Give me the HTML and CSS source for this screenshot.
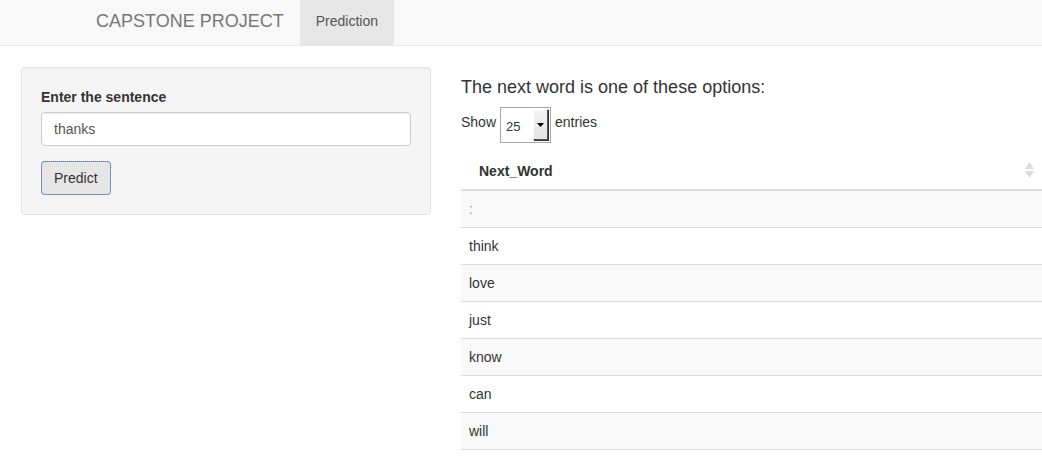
FILE: index.html
```html
<!DOCTYPE html>
<html>
<head>
<meta charset="utf-8">
<link rel="stylesheet" href="styles.css">
</head>
<body>
<nav class="navbar">
  <span class="brand">CAPSTONE PROJECT</span>
  <span class="tab active">Prediction</span>
</nav>
<main class="main">
  <section class="well">
    <label class="label">Enter the sentence</label>
    <div class="input">thanks</div>
    <button class="btn">Predict</button>
  </section>
  <section class="results">
    <h4 class="title">The next word is one of these options:</h4>
    <div class="length">
      <span class="length-text">Show</span>
      <span class="select"><span class="select-val">25</span><span class="select-btn"><svg width="7" height="4" viewBox="0 0 7 4"><path d="M0 0H7L3.5 4Z" fill="#000"/></svg></span></span>
      <span class="length-text">entries</span>
    </div>
    <table class="table">
      <thead>
        <tr><th>Next_Word<span class="sort"><svg width="9" height="16" viewBox="0 0 9 16"><path d="M4.5 0L9 7H0Z M0 9H9L4.5 16Z" fill="#dcdcdc"/></svg></span></th></tr>
      </thead>
      <tbody>
        <tr class="odd"><td class="colon">:</td></tr>
        <tr><td>think</td></tr>
        <tr class="odd"><td>love</td></tr>
        <tr><td>just</td></tr>
        <tr class="odd"><td>know</td></tr>
        <tr><td>can</td></tr>
        <tr class="odd"><td>will</td></tr>
      </tbody>
    </table>
  </section>
</main>
</body>
</html>
```
FILE: styles.css
```css
html, body {
  margin: 0;
  padding: 0;
  background: #fff;
  font-family: "Liberation Sans", Arial, Helvetica, sans-serif;
  font-size: 14px;
  line-height: 20px;
  color: #333;
  overflow: hidden;
}
.navbar {
  display: flex;
  align-items: stretch;
  height: 45px;
  background: #f8f8f8;
  border-bottom: 1px solid #e7e7e7;
  padding-left: 81px;
}
.brand {
  display: flex;
  align-items: center;
  padding: 0 16px 3px 15px;
  font-size: 18px;
  color: #777;
}
.tab {
  display: flex;
  align-items: center;
  padding: 0 16px 3px 16px;
  color: #555;
}
.tab.active {
  background: #e7e7e7;
}
.main {
  display: flex;
  align-items: flex-start;
  padding: 20px 0 0 21px;
  gap: 30px;
}
.well {
  width: 410px;
  box-sizing: border-box;
  margin-top: 1px;
  background: #f5f5f5;
  border: 1px solid #e3e3e3;
  border-radius: 4px;
  box-shadow: inset 0 1px 1px rgba(0,0,0,0.05);
  padding: 19px 19px 18px 19px;
  height: 148px;
}
.label {
  display: block;
  font-weight: bold;
  margin-bottom: 5px;
}
.input {
  box-sizing: border-box;
  height: 34px;
  width: 370px;
  background: #fff;
  border: 1px solid #ccc;
  border-radius: 4px;
  box-shadow: inset 0 1px 1px rgba(0,0,0,0.075);
  padding: 6px 12px;
  color: #555;
}
.btn {
  margin-top: 15px;
  box-sizing: border-box;
  height: 34px;
  padding: 6px 12px;
  font-family: inherit;
  font-size: 14px;
  line-height: 20px;
  color: #333;
  background: #e6e6e6;
  border: 1px solid #adadad;
  border-radius: 4px;
  outline: 1px dotted #3a7bd5;
  outline-offset: -1px;
}
.results {
  flex: 1;
  min-width: 0;
}
.title {
  margin: 9px 0 0 0;
  font-size: 18px;
  font-weight: normal;
  line-height: 24px;
  color: #333;
}
.length {
  display: flex;
  align-items: flex-start;
  gap: 4px;
  margin-top: 8px;
  height: 36px;
}
.length-text {
  padding-top: 5px;
}
.select {
  display: flex;
  box-sizing: border-box;
  width: 51px;
  height: 36px;
  border: 1px solid #a6a6a6;
  background: #fff;
  align-items: stretch;
  padding: 1px;
}
.select-val {
  flex: 1;
  font-size: 13px;
  padding-left: 4px;
  padding-top: 8px;
  color: #333;
}
.select-btn {
  width: 15px;
  box-sizing: border-box;
  background: linear-gradient(#f4f4f4, #e4e4e4);
  border: 1px solid #fff;
  border-right-color: #555;
  border-bottom-color: #555;
  box-shadow: 1px 1px 0 #333;
  display: flex;
  align-items: center;
  justify-content: center;
  margin-right: 1px;
  margin-bottom: 1px;
}
.table {
  width: 100%;
  border-collapse: collapse;
  margin-top: 6px;
}
.table th {
  position: relative;
  text-align: left;
  font-weight: bold;
  padding: 12px 18px 8px 18px;
  border-bottom: 2px solid #ddd;
}
.sort {
  position: absolute;
  right: 8px;
  top: 13px;
  line-height: 0;
}
.table td {
  padding: 8px;
  border-bottom: 1px solid #ddd;
}
.table tr.odd td {
  background: #f9f9f9;
}
.colon {
  color: #c98a4a;
}
```
